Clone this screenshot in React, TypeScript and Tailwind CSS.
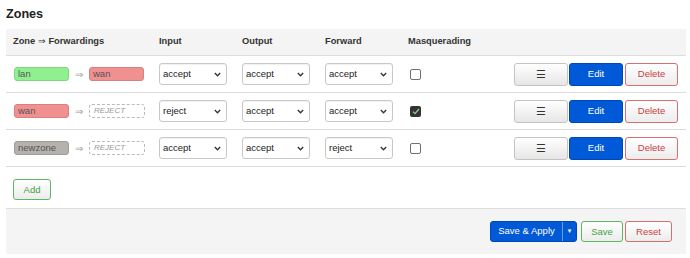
import React from 'react';

interface Zone {
  name: string;
  color: string;
  forward: string | null;
  input: string;
  output: string;
  fwd: string;
  masq: boolean;
}

const zones: Zone[] = [
  { name: 'lan', color: 'bg-[#90f090] border-[#7fd87f]', forward: 'wan', input: 'accept', output: 'accept', fwd: 'accept', masq: false },
  { name: 'wan', color: 'bg-[#f09090] border-[#d88080]', forward: null, input: 'reject', output: 'accept', fwd: 'accept', masq: true },
  { name: 'newzone', color: 'bg-[#b5b2ad] border-[#a09d98]', forward: null, input: 'accept', output: 'accept', fwd: 'reject', masq: false },
];

const cols = 'grid grid-cols-[146px_83px_83px_83px_1fr_auto] items-center';

function Select({ value }: { value: string }) {
  return (
    <div className="flex h-[22px] w-[68px] items-center justify-between rounded-[3px] border border-[#c8c8c8] bg-white pl-[3px] pr-[5px] shadow-[inset_0_1px_1px_rgba(0,0,0,0.06)]">
      <span className="text-[9.5px] text-[#222]">{value}</span>
      <svg width="7" height="5" viewBox="0 0 7 5" fill="none">
        <path d="M0.8 1 L3.5 3.8 L6.2 1" stroke="#333" strokeWidth="1.3" />
      </svg>
    </div>
  );
}

function Badge({ label, color }: { label: string; color: string }) {
  return (
    <span className={`flex h-[14px] w-[55px] items-center rounded-[3px] border px-[3px] text-[9.5px] text-[#555] ${color}`}>
      {label}
    </span>
  );
}

function Checkbox({ checked }: { checked: boolean }) {
  if (checked) {
    return (
      <span className="flex h-[11px] w-[11px] items-center justify-center rounded-[2px] bg-[#333]">
        <svg width="8" height="7" viewBox="0 0 8 7" fill="none">
          <path d="M1 3.6 L3 5.6 L7 1" stroke="#8fd18f" strokeWidth="1.3" />
        </svg>
      </span>
    );
  }
  return <span className="block h-[11px] w-[11px] rounded-[2px] border border-[#707070] bg-white" />;
}

export default function App() {
  return (
    <div className="w-[690px] pl-[6px] pr-[4px] pt-[3px] font-['Liberation_Sans',Arial,sans-serif] text-[#404040]">
      <h2 className="h-[26px] pt-[2px] text-[12.6px] font-bold text-[#222]">Zones</h2>

      {/* header */}
      <div className={`${cols} h-[27px] border-b border-[#ddd] bg-[#f4f4f4] pl-[7px] text-[9.3px] font-bold text-[#333]`}>
        <div>Zone <span className="font-normal">⇒</span> Forwardings</div>
        <div>Input</div>
        <div>Output</div>
        <div>Forward</div>
        <div>Masquerading</div>
        <div />
      </div>

      {zones.map((z) => (
        <div key={z.name} className={`${cols} h-[37px] border-b border-[#ddd] pl-[7px] pr-[8px]`}>
          <div className="flex items-center gap-[6px] pl-[1px]">
            <Badge label={z.name} color={z.color} />
            <span className="text-[10px] text-[#999]">⇒</span>
            {z.forward ? (
              <Badge label={z.forward} color="bg-[#f09090] border-[#d88080]" />
            ) : (
              <span className="flex h-[14px] w-[56px] items-center rounded-[3px] border border-dashed border-[#bbb] px-[4px] text-[8px] italic text-[#999]">
                REJECT
              </span>
            )}
          </div>
          <div><Select value={z.input} /></div>
          <div><Select value={z.output} /></div>
          <div><Select value={z.fwd} /></div>
          <div className="pl-[2px]"><Checkbox checked={z.masq} /></div>
          <div className="flex items-center gap-[1px]">
            <button className="h-[23px] w-[54px] rounded-[3px] border border-[#c4c4c4] bg-gradient-to-b from-white to-[#e6e6e6] text-[11px] text-[#333]">
              ☰
            </button>
            <button className="h-[23px] w-[54px] rounded-[3px] border border-[#0048b8] bg-[#0059d6] text-[9.5px] text-white">
              Edit
            </button>
            <button className="ml-[1px] h-[23px] w-[53px] rounded-[3px] border border-[#d86f6f] bg-gradient-to-b from-white to-[#ececec] text-[9.5px] text-[#c9403f]">
              Delete
            </button>
          </div>
        </div>
      ))}

      <div className="flex h-[41px] items-start pl-[7px] pt-[12px]">
        <button className="h-[21px] w-[38px] rounded-[3px] border border-[#5cb85c] bg-gradient-to-b from-white to-[#ececec] text-[9.5px] leading-none text-[#3fa33f]">
          Add
        </button>
      </div>

      <div className="flex h-[46px] items-center justify-end border-t border-[#ddd] bg-[#f4f4f4] pr-[14px]">
        <div className="flex h-[21px] w-[87px] items-stretch overflow-hidden rounded-[3px] border border-[#0048b8] bg-[#0059d6] text-[9.5px] text-white">
          <span className="flex flex-1 items-center justify-center">Save &amp; Apply</span>
          <span className="flex w-[14px] items-center justify-center border-l border-[#6f9ee6] text-[6px]">▼</span>
        </div>
        <button className="ml-[4px] h-[21px] w-[42px] rounded-[3px] border border-[#5cb85c] bg-gradient-to-b from-white to-[#ececec] text-[9.5px] leading-none text-[#3fa33f]">
          Save
        </button>
        <button className="ml-[2px] h-[21px] w-[47px] rounded-[3px] border border-[#d86f6f] bg-gradient-to-b from-white to-[#ececec] text-[9.5px] leading-none text-[#c9403f]">
          Reset
        </button>
      </div>
    </div>
  );
}
